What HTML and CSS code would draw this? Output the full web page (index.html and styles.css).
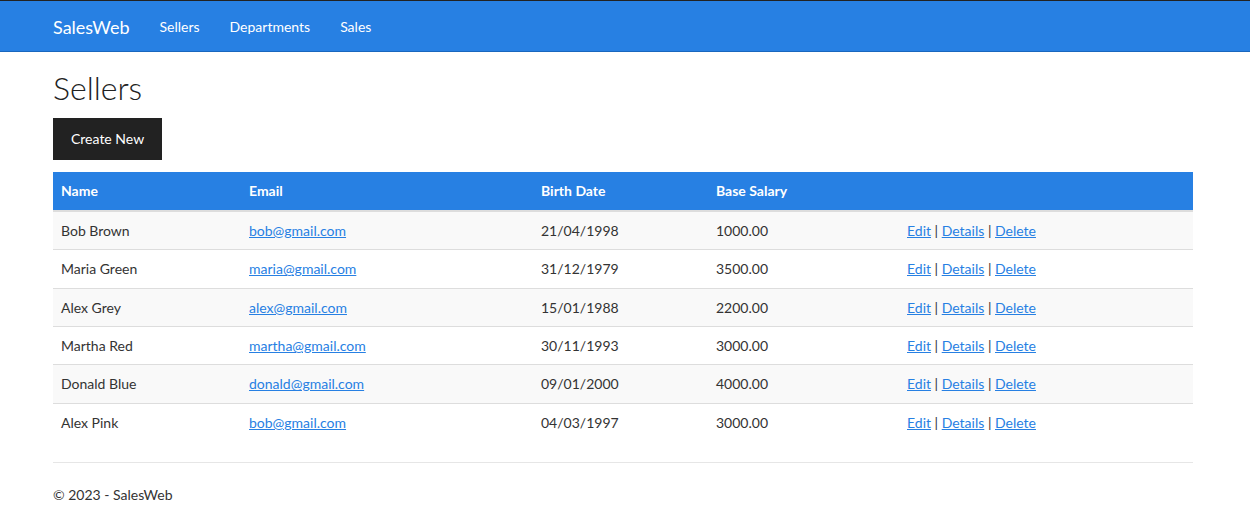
FILE: index.html
```html
<!DOCTYPE html>
<html>
<head>
<meta charset="utf-8">
<title>Sellers - SalesWeb</title>
<link rel="stylesheet" href="styles.css">
</head>
<body>
<nav class="navbar">
  <div class="container nav-inner">
    <a class="brand" href="#">SalesWeb</a>
    <ul class="nav-links">
      <li><a href="#">Sellers</a></li>
      <li><a href="#">Departments</a></li>
      <li><a href="#">Sales</a></li>
    </ul>
  </div>
</nav>
<main class="container">
  <h2 class="title">Sellers</h2>
  <p class="actions-bar"><a class="btn" href="#">Create New</a></p>
  <table class="table">
    <thead>
      <tr>
        <th class="c-name">Name</th>
        <th class="c-email">Email</th>
        <th class="c-date">Birth Date</th>
        <th class="c-sal">Base Salary</th>
        <th class="c-act"></th>
      </tr>
    </thead>
    <tbody>
      <tr><td>Bob Brown</td><td><a href="#">bob@gmail.com</a></td><td>21/04/1998</td><td>1000.00</td><td><a href="#">Edit</a> | <a href="#">Details</a> | <a href="#">Delete</a></td></tr>
      <tr><td>Maria Green</td><td><a href="#">maria@gmail.com</a></td><td>31/12/1979</td><td>3500.00</td><td><a href="#">Edit</a> | <a href="#">Details</a> | <a href="#">Delete</a></td></tr>
      <tr><td>Alex Grey</td><td><a href="#">alex@gmail.com</a></td><td>15/01/1988</td><td>2200.00</td><td><a href="#">Edit</a> | <a href="#">Details</a> | <a href="#">Delete</a></td></tr>
      <tr><td>Martha Red</td><td><a href="#">martha@gmail.com</a></td><td>30/11/1993</td><td>3000.00</td><td><a href="#">Edit</a> | <a href="#">Details</a> | <a href="#">Delete</a></td></tr>
      <tr><td>Donald Blue</td><td><a href="#">donald@gmail.com</a></td><td>09/01/2000</td><td>4000.00</td><td><a href="#">Edit</a> | <a href="#">Details</a> | <a href="#">Delete</a></td></tr>
      <tr><td>Alex Pink</td><td><a href="#">bob@gmail.com</a></td><td>04/03/1997</td><td>3000.00</td><td><a href="#">Edit</a> | <a href="#">Details</a> | <a href="#">Delete</a></td></tr>
    </tbody>
  </table>
  <hr class="rule">
  <footer class="footer"><p>&copy; 2023 - SalesWeb</p></footer>
</main>
</body>
</html>
```
FILE: styles.css
```css
* { box-sizing: border-box; }
html, body { margin: 0; padding: 0; }
body {
  font-family: Lato, "Noto Sans", sans-serif;
  font-size: 14px;
  line-height: 21.43px;
  color: #333;
  background: #fff;
}
a { color: #2780e3; }
.container {
  width: 1140px;
  margin-left: 53px;
}
.navbar {
  background: #2780e3;
  border-top: 1px solid #222;
  border-bottom: 1px solid #1967be;
  height: 52px;
}
.nav-inner {
  display: flex;
  align-items: center;
  height: 50px;
  padding-top: 2px;
}
.brand {
  color: #fff;
  text-decoration: none;
  font-size: 18px;
  padding-right: 15px;
  line-height: 48px;
}
.nav-links {
  display: flex;
  list-style: none;
  margin: 0;
  padding: 0;
}
.nav-links a {
  display: block;
  color: #fff;
  text-decoration: none;
  padding: 0 15px;
  line-height: 48px;
}
.title {
  font-size: 32px;
  font-weight: 300;
  margin: 18px 0 13px;
  line-height: 1.1;
  color: #222;
}
.actions-bar { margin: 0 0 12px; }
.btn {
  display: inline-block;
  background: #222;
  color: #fff;
  text-decoration: none;
  padding: 10px 18px;
  font-size: 14px;
  line-height: 22px;
}
.table {
  width: 1140px;
  border-collapse: collapse;
  margin-bottom: 21px;
}
.table th {
  background: #2780e3;
  color: #fff;
  text-align: left;
  font-weight: 700;
  padding: 8px;
  border-bottom: 2px solid #ddd;
}
.table td {
  padding: 8px;
  border-top: 1px solid #ddd;
  vertical-align: top;
}
.table tbody tr:first-child td { border-top: 0; }
.table tbody tr:nth-child(odd) td { background: #f9f9f9; }
.c-name { width: 188px; }
.c-email { width: 292px; }
.c-date { width: 175px; }
.c-sal { width: 191px; }
.rule {
  border: 0;
  border-top: 1px solid #e6e6e6;
  margin: 21px 0;
}
.footer p { margin: 0 0 10px; }
```
